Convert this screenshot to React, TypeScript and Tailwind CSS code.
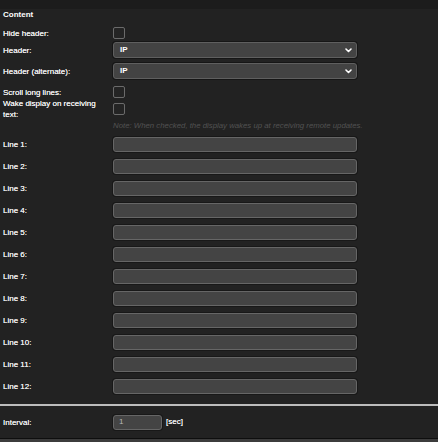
const lines = Array.from({ length: 12 }, (_, i) => `Line ${i + 1}:`);

const Label = ({ children }: { children: React.ReactNode }) => (
    <div className="w-[113px] shrink-0 pl-[3px] pr-[14px] text-[8px] leading-[11px] text-[#ececec] [text-shadow:0_0_0.4px_#fff]">{children}</div>
);

const Checkbox = () => (
    <div className="w-[12px] h-[12px] rounded-[2px] border border-[#6b6b6b] bg-[#242424]" />
);

const Select = ({ value }: { value: string }) => (
    <div className="flex items-center justify-between w-[244px] h-[16px] rounded-[3px] border border-[#5f5f5f] bg-[#434343] shadow-[0_0_0_1px_#161616] pl-[6px] pr-[4px]">
        <span className="text-[8px] font-bold text-white">{value}</span>
        <svg className="w-[7px] h-[5px]" viewBox="0 0 7 5" fill="none">
            <path d="M1 1l2.5 2.5L6 1" stroke="#fff" strokeWidth="1.6" strokeLinecap="round" strokeLinejoin="round" />
        </svg>
    </div>
);

const TextInput = ({ width = 'w-[244px]', value = '' }: { width?: string; value?: string }) => (
    <div className={`${width} h-[15px] rounded-[3px] border border-[#666] bg-[#444] shadow-[0_0_0_1px_#181818] flex items-center pl-[5px] text-[8px] text-[#b8b8b8]`}>
        {value}
    </div>
);

export default function App() {
    return (
        <div className="w-[438px] h-[442px] bg-[#222] overflow-hidden" style={{ fontFamily: '"Liberation Sans", Arial, sans-serif' }}>
            <div className="h-[9px] bg-[#1c1c1c]" />
            <div className="pl-[3px] text-[8px] leading-[12px] font-bold text-white">Content</div>

            <div className="flex items-center mt-[6px] h-[12px]">
                <Label>Hide header:</Label>
                <Checkbox />
            </div>
            <div className="flex items-center mt-[3px] h-[16px]">
                <Label>Header:</Label>
                <Select value="IP" />
            </div>
            <div className="flex items-center mt-[5px] h-[16px]">
                <Label>Header (alternate):</Label>
                <Select value="IP" />
            </div>
            <div className="flex items-center mt-[7px] h-[12px]">
                <Label>Scroll long lines:</Label>
                <Checkbox />
            </div>
            <div className="flex items-center h-[22px]">
                <Label>Wake display on receiving text:</Label>
                <Checkbox />
            </div>
            <div className="pl-[113px] text-[7.8px] leading-[12px] italic text-[#525252]">
                Note: When checked, the display wakes up at receiving remote updates.
            </div>

            <div className="mt-[1px]">
                {lines.map((l) => (
                    <div key={l} className="flex items-center h-[22px]">
                        <Label>{l}</Label>
                        <TextInput />
                    </div>
                ))}
            </div>

            <div className="mt-[7px] h-[2px] bg-[#bdbdbd]" />

            <div className="flex items-center mt-[5px] h-[22px]">
                <Label>Interval:</Label>
                <TextInput width="w-[49px]" value="1" />
                <span className="ml-[4px] text-[8px] text-[#ececec] [text-shadow:0_0_0.4px_#fff]">[sec]</span>
            </div>

            <div className="mt-[5px] h-[1px] bg-[#0e0e0e]" />
            <div className="h-[4px] bg-[#3c3c3c]" />
        </div>
    );
}
